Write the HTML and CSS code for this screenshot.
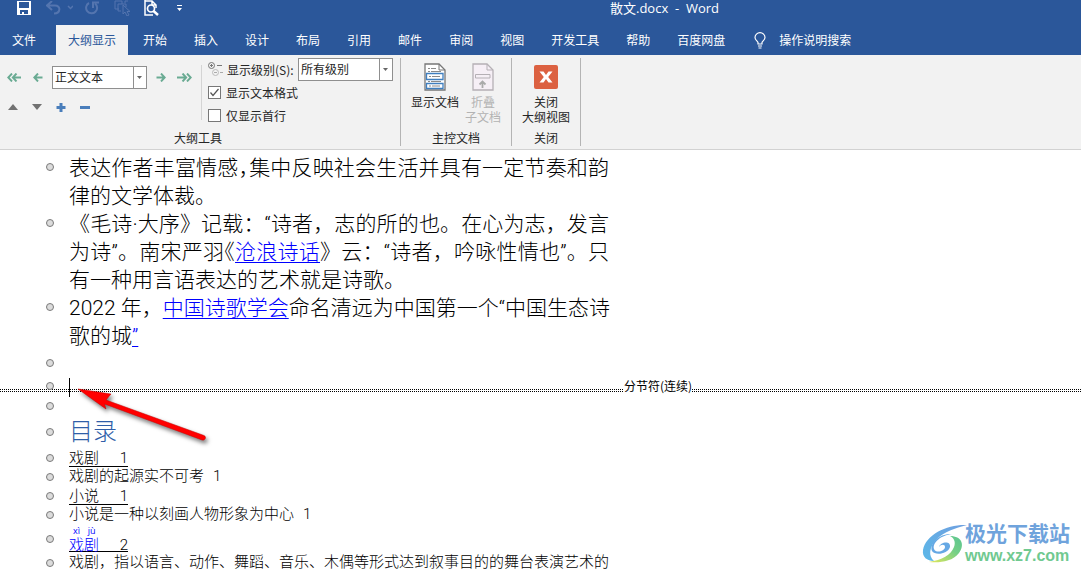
FILE: index.html
```html
<!DOCTYPE html>
<html lang="zh-CN">
<head>
<meta charset="utf-8">
<title>散文.docx - Word</title>
<link rel="stylesheet" href="styles.css">
</head>
<body>
<header class="titlebar">
  <div class="quick-access">
    <button class="qa-button" aria-label="保存"><svg width="14" height="14" viewBox="0 0 14 14"><path fill="#fff" fill-rule="evenodd" d="M0 0H14V14H0ZM2 1V7H12V1ZM3 9V13H5V11H7V13H11V9Z"/></svg></button>
    <button class="qa-button undo" aria-label="撤消" disabled><svg width="27" height="14" viewBox="0 0 27 14"><path d="M6 0L1 4.500L6 9M2 4.500H9C15 4.500 15 12 8 12.500" fill="none" stroke="#5475af" stroke-width="2"/><path d="M22 5L24.500 7.500L27 5" fill="none" stroke="#5475af" stroke-width="1.500"/></svg></button>
    <button class="qa-button redo" aria-label="重复" disabled><svg width="14" height="14" viewBox="0 0 14 14"><path d="M4 2A5.500 5.500 0 1 0 10 2.500M8 7V1.500H14" fill="none" stroke="#5475af" stroke-width="2"/></svg></button>
    <button class="qa-button pick" aria-label="选择对象" disabled><svg width="17" height="16" viewBox="0 0 17 16"><path d="M5 9H1V1H8V4M11 3V1H14M4 4H12V7M4 4V11H7" fill="none" stroke="#5475af"/><path d="M9 5V14L11 12L13 16L15 15L13 11.500H16Z" fill="#2b579a" stroke="#5475af"/></svg></button>
    <button class="qa-button preview" aria-label="打印预览"><svg width="15" height="16" viewBox="0 0 15 16"><path d="M1 1H8L12 5V8M1 0V15H9M8 1V5H12" fill="none" stroke="#fff" stroke-width="1.500"/><circle cx="7" cy="8.500" r="3.500" fill="#2b579a" stroke="#fff" stroke-width="1.700"/><path d="M9.500 11L14 15" stroke="#fff" stroke-width="2.400"/></svg></button>
    <button class="qa-button more" aria-label="自定义快速访问工具栏"><svg width="5" height="6" viewBox="0 0 5 6"><path d="M0 0H5V1H0ZM0 3H5L2.500 6Z" fill="#fff"/></svg></button>
  </div>
  <div class="window-title">散文.docx&nbsp; -&nbsp; Word</div>
</header>
<nav class="tabs">
  <button class="tab file-tab">文件</button>
  <button class="tab active">大纲显示</button>
  <button class="tab">开始</button>
  <button class="tab">插入</button>
  <button class="tab">设计</button>
  <button class="tab">布局</button>
  <button class="tab">引用</button>
  <button class="tab">邮件</button>
  <button class="tab">审阅</button>
  <button class="tab">视图</button>
  <button class="tab">开发工具</button>
  <button class="tab">帮助</button>
  <button class="tab">百度网盘</button>
  <button class="tell-me"><svg width="12" height="17" viewBox="0 0 12 17"><path d="M4 12V10.500C3.500 9 1 8 1 5.500A5 4.800 0 0 1 11 5.500C11 8 8.500 9 8 10.500V12ZM4 14H8M4.500 16H7.500" fill="none" stroke="#fff" stroke-width="1.200"/></svg>操作说明搜索</button>
</nav>
<section class="ribbon">
  <div class="group outline-group">
    <div class="outline-body">
      <div class="level-tools">
        <div class="level-row">
          <button class="tool to-top" aria-label="提升至标题 1"><svg width="14" height="9" viewBox="0 0 14 9"><path d="M5 0.500L1.300 4.500L5 8.500M9.500 0.500L5.800 4.500L9.500 8.500M6 4.500H14" fill="none" stroke="#6aab93" stroke-width="1.900"/></svg></button>
          <button class="tool" aria-label="升级"><svg width="10" height="9" viewBox="0 0 10 9"><path d="M5 0.500L1.300 4.500L5 8.500M1.500 4.500H9.500" fill="none" stroke="#6aab93" stroke-width="1.900"/></svg></button>
          <span class="combo"><select aria-label="大纲级别"><option>正文文本</option></select><svg class="combo-arrow" width="5" height="3" viewBox="0 0 5 3"><path d="M0 0H5L2.500 3Z" fill="#666"/></svg></span>
          <button class="tool" aria-label="降级"><svg width="10" height="9" viewBox="0 0 10 9"><path d="M5 0.500L8.700 4.500L5 8.500M0.500 4.500H8.500" fill="none" stroke="#6aab93" stroke-width="1.900"/></svg></button>
          <button class="tool to-body" aria-label="降级为正文"><svg width="15" height="9" viewBox="0 0 15 9"><path d="M5.500 0.500L9.200 4.500L5.500 8.500M10 0.500L13.700 4.500L10 8.500M0 4.500H9" fill="none" stroke="#6aab93" stroke-width="1.900"/></svg></button>
        </div>
        <div class="move-row">
          <button class="tool" aria-label="上移"><svg width="10" height="6" viewBox="0 0 10 6"><path d="M0 6L5 0L10 6Z" fill="#727272"/></svg></button>
          <button class="tool" aria-label="下移"><svg width="10" height="6" viewBox="0 0 10 6"><path d="M0 0H10L5 6Z" fill="#727272"/></svg></button>
          <button class="tool" aria-label="展开"><svg width="10" height="9" viewBox="0 0 10 9"><path d="M3.500 0H6.500V3H9.500V6H6.500V9H3.500V6H0.500V3H3.500Z" fill="#4a7ebb"/></svg></button>
          <button class="tool" aria-label="折叠"><svg width="10" height="9" viewBox="0 0 10 9"><path d="M0 3H10V6H0Z" fill="#4a7ebb"/></svg></button>
        </div>
      </div>
      <div class="show-tools">
        <div class="show-level">
          <svg width="15" height="15" viewBox="0 0 15 15" fill="none"><circle cx="3.500" cy="3.500" r="3" stroke="#777"/><path d="M2 3.500H5M3.500 2V5M9 3.500H14" stroke="#777"/><circle cx="7.500" cy="10.500" r="3" stroke="#bbb"/><path d="M6 10.500H9M12 10.500H15" stroke="#aaa"/></svg>
          <label for="show-level">显示级别(S):</label>
          <span class="combo"><select id="show-level"><option>所有级别</option></select><svg class="combo-arrow" width="5" height="3" viewBox="0 0 5 3"><path d="M0 0H5L2.500 3Z" fill="#666"/></svg></span>
        </div>
        <label class="check"><input type="checkbox" checked>显示文本格式</label>
        <label class="check"><input type="checkbox">仅显示首行</label>
      </div>
    </div>
    <div class="group-label">大纲工具</div>
  </div>
  <div class="group master-group">
    <div class="big-buttons">
      <button class="big-button"><svg width="22" height="28" viewBox="0 0 22 28"><path d="M1 1H15L21 7V27H1Z" fill="#fff" stroke="#777" stroke-width="1.300"/><path d="M15 1V7H21" fill="none" stroke="#777"/><path d="M4 5.500H6M7 5.500H12M4 8.500H6M7 8.500H17M4 18.500H6M7 18.500H17" stroke="#8a8a8a"/><path d="M2.500 10.500H19V16.500H2.500ZM2.500 20.500H19V25.500H2.500Z" fill="#fff" stroke="#3f7fbf" stroke-width="1.300"/><path d="M5 13.500H7M8 13.500H16M5 23H7M8 23H16" stroke="#8a8a8a"/></svg><span>显示文档</span></button>
      <button class="big-button" disabled><svg width="22" height="28" viewBox="0 0 22 28"><path d="M1 1H15L21 7V27H1Z" fill="#f6eff6" stroke="#b5b0b5" stroke-width="1.300"/><path d="M15 1V7H21M3.500 11.500H18V15H3.500Z" fill="none" stroke="#b5b0b5"/><path d="M10.500 25V19M7.500 21.500L10.500 18.500L13.500 21.500" fill="none" stroke="#aaa" stroke-width="1.800"/></svg><span>折叠<br>子文档</span></button>
    </div>
    <div class="group-label">主控文档</div>
  </div>
  <div class="group close-group">
    <div class="big-buttons">
      <button class="big-button"><svg width="24" height="28" viewBox="0 0 24 28"><rect y="2" width="24" height="24" rx="2" fill="#dc6141"/><path d="M5.500 8.500H9.500L12 12L14.500 8.500H18.500L14.200 14L18.500 19.500H14.500L12 16L9.500 19.500H5.500L9.800 14Z" fill="#fff"/></svg><span>关闭<br>大纲视图</span></button>
    </div>
    <div class="group-label">关闭</div>
  </div>
</section>
<main class="document">
  <div class="row large">
    <i class="bullet"></i>
    <p><span class="line">表达作者丰富情感<span class="half">，</span>集中反映社会生活并具有一定节奏和韵</span><span class="line last">律的文学体裁。</span></p>
  </div>
  <div class="row large">
    <i class="bullet"></i>
    <p><span class="line">《毛诗·大序》记载：“诗者，志的所的也。在心为志，发言</span><span class="line">为诗”。南宋严羽<span class="half">《</span><a href="#">沧浪诗话</a>》云：“诗者，吟咏性情也”。只</span><span class="line last">有一种用言语表达的艺术就是诗歌。</span></p>
  </div>
  <div class="row large">
    <i class="bullet"></i>
    <p><span class="line">2022 年，<a href="#">中国诗歌学会</a>命名清远为中国第一个“中国生态诗</span><span class="line last">歌的城<a href="#">”</a></span></p>
  </div>
  <div class="row blank tall"><i class="bullet"></i></div>
  <div class="row section-break">
    <i class="bullet"></i>
    <i class="caret"></i>
    <i class="dots before"></i><span>分节符(连续)</span><i class="dots after"></i>
    <svg class="pointer" width="140" height="64" viewBox="0 0 140 64"><path d="M6 5L39 10L34 16L132 51.500C135 53 133 57 130 56L32.500 20L34 25Z" fill="#f00" stroke="#c40000" stroke-width="0.500"/></svg>
  </div>
  <div class="row blank"><i class="bullet"></i></div>
  <div class="row heading"><i class="bullet"></i><h1>目录</h1></div>
  <div class="row"><i class="bullet"></i><a class="toc" href="#"><span>戏剧</span><span>1</span></a></div>
  <div class="row"><i class="bullet"></i><p class="entry"><span>戏剧的起源实不可考</span><span>1</span></p></div>
  <div class="row"><i class="bullet"></i><a class="toc" href="#"><span>小说</span><span>1</span></a></div>
  <div class="row"><i class="bullet"></i><p class="entry"><span>小说是一种以刻画人物形象为中心</span><span>1</span></p></div>
  <div class="row pinyin"><i class="bullet"></i><a class="toc" href="#"><span class="phonetic"><ruby>戏<rt>xì</rt></ruby><ruby>剧<rt>jù</rt></ruby></span><span>2</span></a></div>
  <div class="row"><i class="bullet"></i><p>戏剧，指以语言、动作、舞蹈、音乐、木偶等形式达到叙事目的的舞台表演艺术的</p></div>
  <div class="watermark">
    <svg width="46" height="40" viewBox="0 0 46 40"><defs><linearGradient id="sky" x1="0" y1="1" x2="1" y2="0"><stop offset="0" stop-color="#5bb8e8"/><stop offset="1" stop-color="#6f9fe0"/></linearGradient><linearGradient id="leaf" x1="0" y1="1" x2="1" y2="0"><stop offset="0" stop-color="#e3e85c"/><stop offset="0.600" stop-color="#74cf86"/><stop offset="1" stop-color="#5bc592"/></linearGradient></defs><path d="M45 1C26 0 4 10 1 26C0 33 5 37 12 37C6 32 7 23 15 15C22 8 33 4 45 1Z" fill="url(#sky)"/><path d="M30 10C19 11 10 19 12 25C14 30 23 27 23 23C23 20 19 20 17 23C18 18 29 16 28 23C26 30 13 32 10 27C7 19 18 9 30 10Z" fill="#65a8e4"/><path d="M28 12C40 12 43 21 37 29C30 38 17 39 7 38C20 36 29 31 32 23C34 18 32 14 28 12Z" fill="url(#leaf)"/></svg>
    <div class="site"><strong>极光下载站</strong><b>www.xz7.com</b></div>
  </div>
</main>
</body>
</html>
```
FILE: styles.css
```css
* { box-sizing: border-box; }
body {
  margin: 0;
  min-height: 100vh;
  display: flex;
  flex-direction: column;
  background: #fff;
  color: #262626;
  font: 12px/16px "Noto Sans CJK SC", sans-serif;
  overflow: hidden;
}
button {
  border: 0;
  padding: 0;
  background: none;
  color: inherit;
  font: inherit;
  white-space: nowrap;
}
svg { display: block; flex: none; }
p, h1 { margin: 0; font-weight: inherit; }

.titlebar {
  display: flex;
  height: 25px;
  background: #2b579a;
  color: #fff;
}
.quick-access {
  display: flex;
  align-items: center;
  width: 248px;
  height: 16px;
  padding-left: 17px;
}
.undo { margin-left: 15px; }
.redo { margin-left: 12px; }
.pick { margin-left: 15px; }
.preview { margin-left: 13px; }
.more { margin-left: 18px; }
.window-title {
  flex: 1;
  text-align: center;
  font: 13px/16px "Open Sans", "Noto Sans CJK SC", sans-serif;
}

.tabs {
  display: flex;
  gap: 3px;
  height: 30px;
  background: #2b579a;
  color: #fff;
}
.tab { padding: 0 12px; }
.file-tab { margin-right: 5px; }
.tab.active { background: #f2f2f2; color: #2b579a; }
.tell-me {
  display: flex;
  align-items: center;
  gap: 13px;
  margin-left: 14px;
}

.ribbon {
  display: flex;
  height: 95px;
  padding-top: 3px;
  background: #f2f2f2;
  border-bottom: 1px solid #d2d2d2;
}
.group {
  display: flex;
  flex-direction: column;
  justify-content: space-between;
  height: 88px;
  border-right: 1px solid #b4b4b4;
}
.outline-group { width: 401px; }
.outline-group .group-label { padding-right: 4px; }
.master-group { width: 111px; }
.close-group { width: 69px; }
.group-label { text-align: center; }
.outline-body { display: flex; }
.level-tools {
  width: 202px;
  height: 55px;
  margin-top: 7px;
  padding: 1px 0 0 7px;
  border-right: 1px solid #d4d4d4;
}
.level-row { display: flex; align-items: center; gap: 9px; }
.level-row .to-top { margin-right: 3px; }
.level-row .to-body { margin-left: 2px; }
.move-row { display: flex; align-items: center; gap: 14px; height: 14px; margin: 11px 0 0 1px; }
.combo { position: relative; display: block; width: 95px; height: 23px; }
.combo select {
  appearance: none;
  width: 100%;
  height: 100%;
  padding: 0 0 1px 2px;
  border: 1px solid #8f8f8f;
  border-radius: 0;
  background: linear-gradient(#8f8f8f, #8f8f8f) right 12px top / 1px 100% no-repeat #fff;
  color: #262626;
  font: inherit;
}
.combo-arrow { position: absolute; right: 5px; top: 10px; }
.show-tools { padding-left: 6px; }
.show-level { display: flex; align-items: center; height: 23px; }
.show-level label { width: 71px; margin-left: 4px; white-space: nowrap; }
.check { display: flex; align-items: center; gap: 5px; height: 23px; }
.check input {
  appearance: none;
  width: 13px;
  height: 13px;
  margin: 0;
  border: 1px solid #777;
  background: #fff;
}
.check input:checked {
  background: url("data:image/svg+xml,%3Csvg xmlns='http://www.w3.org/2000/svg' width='11' height='11'%3E%3Cpath d='M1.500 5.500L4 8.500L9.500 2' fill='none' stroke='%23555' stroke-width='1.200'/%3E%3C/svg%3E") center no-repeat #fff;
}
.big-buttons { display: flex; justify-content: center; }
.master-group .big-buttons { justify-content: flex-start; padding-left: 10px; }
.big-button {
  display: flex;
  flex-direction: column;
  align-items: center;
  width: 48px;
  padding-top: 5px;
  line-height: 15px;
}
.big-button span { margin-top: 3px; }
.big-button:disabled { color: #b3b3b3; }

.document {
  position: relative;
  flex: 1;
  padding-top: 4px;
  color: #000;
  font: 300 15px/19px Roboto, "Noto Sans CJK SC", sans-serif;
}
.row {
  display: flex;
  align-items: center;
  min-height: 19px;
  padding-left: 46px;
  white-space: nowrap;
}
.bullet {
  flex: none;
  width: 8px;
  height: 8px;
  margin-right: 15px;
  border: 1px solid #7a7a7a;
  border-radius: 50%;
  background: #dcdcdc;
}
.large { align-items: flex-start; font-size: 21px; line-height: 28px; }
.large .bullet { margin-top: 9px; }
.large p { width: 540px; }
.line { display: block; height: 28px; text-align-last: justify; }
.line.last { text-align-last: left; }
.half { font-feature-settings: "halt"; }
.document a { color: #00f; text-decoration: underline 1px #00f; text-underline-offset: 3px; }
.tall { min-height: 26px; }
.section-break {
  position: relative;
  height: 20px;
  padding-left: 0;
  font: 12px/16px "Noto Sans CJK SC", sans-serif;
}
.section-break .bullet { position: absolute; left: 46px; z-index: 1; }
.caret { position: absolute; left: 69px; top: 2px; width: 1px; height: 19px; background: #000; }
.dots {
  height: 3px;
  margin-top: 9px;
  background:
    linear-gradient(#fff, #fff) 0 1px / 100% 1px no-repeat,
    repeating-linear-gradient(90deg, #000 0 1px, #fff 1px 2px);
}
.before { flex: 621; }
.after { flex: 387; }
.pointer { position: absolute; left: 72px; top: 8px; z-index: 2; filter: drop-shadow(2px 3px 2px #0008); }
.heading { min-height: 33px; }
.heading h1 { color: #2f5ea8; font-size: 24px; line-height: 32px; }
.document .toc {
  display: flex;
  justify-content: space-between;
  width: 59px;
  height: 18px;
  border-bottom: 1px solid #000;
  color: #000;
  text-decoration: none;
}
.entry { display: flex; gap: 9px; }
.pinyin { min-height: 29px; align-items: flex-start; }
.pinyin .bullet { margin-top: 11px; }
.document .pinyin .toc { height: 28px; align-items: flex-end; line-height: 11px; }
.phonetic { color: #00f; }
rt { font: 9px/9px "Open Sans", sans-serif; }

.watermark { position: absolute; right: 11px; bottom: 6px; display: flex; align-items: center; }
.site { display: flex; flex-direction: column; margin-left: -3px; }
.site strong { color: #6fa3dc; font: 700 21px/24px "Liberation Sans", "Noto Sans CJK SC", sans-serif; }
.site b { color: #70c990; font: 700 16px/20px "Liberation Sans", sans-serif; }
```
